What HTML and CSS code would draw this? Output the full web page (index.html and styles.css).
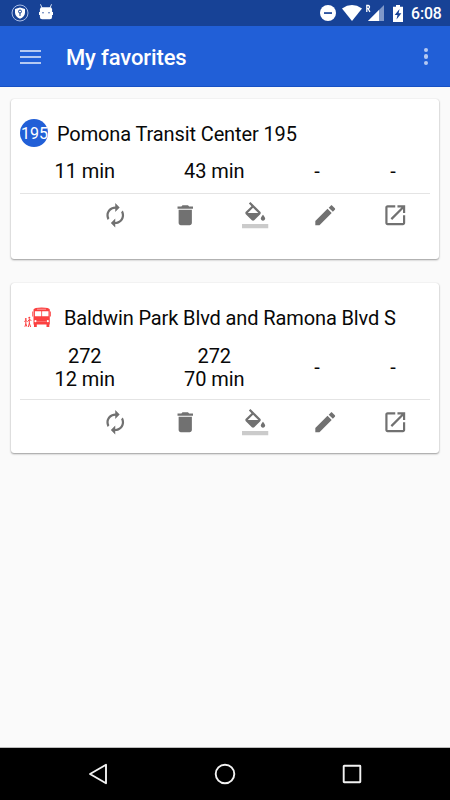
FILE: index.html
```html
<!DOCTYPE html>
<html lang="en">
<head>
<meta charset="utf-8">
<title>My favorites</title>
<link rel="stylesheet" href="styles.css">
</head>
<body>
<svg class="defs" width="0" height="0" aria-hidden="true">
  <symbol id="refresh" viewBox="0 0 24 24"><path d="M12 6v3l4-4-4-4v3c-4.420 0-8 3.580-8 8 0 1.570.46 3.030 1.240 4.260L6.700 14.800c-.45-.83-.7-1.790-.7-2.800 0-3.310 2.690-6 6-6zm6.760 1.740L17.300 9.200c.44.84.7 1.790.7 2.800 0 3.310-2.690 6-6 6v-3l-4 4 4 4v-3c4.420 0 8-3.580 8-8 0-1.570-.46-3.030-1.240-4.260z"/></symbol>
  <symbol id="trash" viewBox="0 0 24 24"><path d="M6 19c0 1.100.9 2 2 2h8c1.100 0 2-.9 2-2V7H6v12zM19 4h-3.500l-1-1h-5l-1 1H5v2h14V4z"/></symbol>
  <symbol id="fill" viewBox="0 0 24 24"><path d="M16.560 8.940L7.620 0 6.210 1.410l2.380 2.380-5.150 5.150c-.59.59-.59 1.540 0 2.120l5.500 5.500c.29.29.68.44 1.060.44s.77-.15 1.060-.44l5.500-5.500c.59-.58.59-1.530 0-2.120zM5.210 10L10 5.210 14.790 10H5.210zM19 11.500s-2 2.170-2 3.500c0 1.100.9 2 2 2s2-.9 2-2c0-1.330-2-3.500-2-3.500z"/><path fill="#cbcbcb" d="M0 20h24v4H0z"/></symbol>
  <symbol id="edit" viewBox="0 0 24 24"><path d="M3 17.250V21h3.750L17.810 9.940l-3.750-3.750L3 17.250zM20.710 7.040c.39-.39.39-1.020 0-1.410l-2.340-2.340c-.39-.39-1.020-.39-1.410 0l-1.830 1.830 3.750 3.750 1.830-1.830z"/></symbol>
  <symbol id="open" viewBox="0 0 24 24"><path d="M19 19H5V5h7V3H5c-1.110 0-2 .9-2 2v14c0 1.100.89 2 2 2h14c1.100 0 2-.9 2-2v-7h-2v7zM14 3v2h3.590l-9.830 9.830 1.410 1.410L19 6.410V10h2V3h-7z"/></symbol>
</svg>

<div class="status">
  <svg class="shield" viewBox="0 0 18 18"><circle cx="9" cy="9" r="8" fill="none" stroke="#a9bde6"/><path fill="#fff" d="M9 3.500l5 1.600v3.400c0 3-2 5-5 6.200-3-1.200-5-3.200-5-6.200V5.100z"/><circle cx="9" cy="7.500" r="1.500" fill="none" stroke="#174296"/><path d="M9 9v3" stroke="#174296"/></svg>
  <svg class="droid" viewBox="0 0 14 16"><path stroke="#dbe4f5" stroke-width="1" d="M1.500.3L3 4M12.500.3L11 4"/><rect x=".9" y="3.300" width="12.200" height="12" rx="2.200" fill="#fff"/><path stroke="#fff" stroke-width="1.200" d="M.6 8v3M13.400 8v3"/><circle cx="4" cy="8.800" r=".7" fill="#174296"/><circle cx="10" cy="8.800" r=".7" fill="#174296"/></svg>
  <span class="spacer"></span>
  <svg class="dnd" viewBox="0 0 16 16"><circle cx="8" cy="8" r="8" fill="#fff"/><path fill="#174296" d="M4 7.200h8v1.700H4z"/></svg>
  <svg class="wifi" viewBox="0 0 20 16"><path fill="#fff" d="M0 3.500Q10-3.300 20 3.500L10 16z"/></svg>
  <svg class="signal" viewBox="0 0 18 17"><path fill="#7f98c9" d="M18 1v16H2z"/><path fill="#fff" d="M13 6v11H2z"/><path fill="none" stroke="#fff" stroke-width="1.300" d="M.8 8V1.500h1.400q1.300 0 1.300 1.500T2.200 4.700H.8M2.200 4.700L3.900 8"/></svg>
  <svg class="battery" viewBox="0 0 10 17"><path fill="#fff" d="M3 0h4v1.700h3V17H0V1.700h3z"/><path fill="#174296" d="M6.500 4L1.700 10h2.800l-1 4.500L8.400 8.300H5.600z"/></svg>
  <span class="clock">6:08</span>
</div>

<header class="appbar">
  <div class="burger"><i></i><i></i><i></i></div>
  <h1>My favorites</h1>
  <div class="more"><i></i><i></i><i></i></div>
</header>

<main>
  <section class="card card-route">
    <div class="head"><span class="badge">195</span><h2>Pomona Transit Center 195</h2></div>
    <div class="times"><span>11 min</span><span>43 min</span><span>-</span><span>-</span></div>
    <div class="actions">
      <svg><use href="#refresh"/></svg><svg><use href="#trash"/></svg><svg class="paint"><use href="#fill"/></svg><svg><use href="#edit"/></svg><svg><use href="#open"/></svg>
    </div>
  </section>
  <section class="card card-stop">
    <div class="head">
      <svg class="bus" viewBox="0 0 27 21"><g fill="#fb4040"><path d="M9.500 2.500Q10 .5 17.700.5T25.800 2.500V17.500h-.5V20h-2.800v-2.500h-9.700V20H10v-2.500h-.5z"/><path d="M8.300 4.500h.8v5h-.8zM26.200 4.500h.8v5h-.8z"/><circle cx="1.800" cy="12" r=".9"/><circle cx="5.300" cy="10.800" r="1"/></g><path fill="none" stroke="#fb4040" stroke-width="1" d="M.3 14.500l1.600-1 1.500 1M1.800 13.300v3.500l-.9 3M1.800 16.500l1 3M3.700 14.500l1.700-2 2 1M5.300 12.300v4.200l-1 3.500M5.300 16l1.300 4"/><path fill="#fff" d="M10.900 4.300h6.400v5h-6.400zM18.100 4.300h6.400v5h-6.400z"/><path fill="#ffb0b0" d="M13 1.800h9v.8h-9z"/><path fill="#ff8080" d="M13 14h9v.7h-9z"/><circle cx="11.500" cy="14.200" r="1.100" fill="#fff"/><circle cx="23.800" cy="14.200" r="1.100" fill="#fff"/></svg>
      <h2>Baldwin Park Blvd and Ramona Blvd S</h2>
    </div>
    <div class="times"><span>272<br>12 min</span><span>272<br>70 min</span><span>-</span><span>-</span></div>
    <div class="actions">
      <svg><use href="#refresh"/></svg><svg><use href="#trash"/></svg><svg class="paint"><use href="#fill"/></svg><svg><use href="#edit"/></svg><svg><use href="#open"/></svg>
    </div>
  </section>
</main>

<nav class="navbar">
  <svg viewBox="0 0 22 22"><path d="M19 1.700v18.600L3 11z"/></svg>
  <svg viewBox="0 0 22 22"><circle cx="11" cy="11" r="9.300"/></svg>
  <svg viewBox="0 0 22 22"><rect x="2.700" y="2.700" width="16.600" height="16.600" rx=".5"/></svg>
</nav>
</body>
</html>
```

FILE: styles.css
```css
* { box-sizing: border-box; }
body {
  margin: 0;
  width: 450px;
  height: 800px;
  display: flex;
  flex-direction: column;
  overflow: hidden;
  background: #fafafa;
  color: #080808;
  font-family: Roboto, sans-serif;
}
svg { display: block; flex: none; }
.defs { position: absolute; }
h1, h2 { margin: 0; white-space: nowrap; }

.status {
  height: 26px;
  flex: none;
  display: flex;
  align-items: center;
  padding: 0 9px 0 11px;
  background: #174296;
}
.shield { width: 18px; height: 18px; }
.droid { width: 14px; height: 16px; margin: -2px 0 0 10px; }
.spacer { flex: 1; }
.dnd { width: 16px; height: 16px; }
.wifi { width: 20px; height: 16px; margin-left: 6px; }
.signal { width: 18px; height: 17px; margin: -1px 0 0 4px; }
.battery { width: 10px; height: 17px; margin-left: 9px; }
.clock {
  width: 30px;
  margin-left: 8px;
  padding-top: 2px;
  color: #fff;
  font-size: 15.800px;
  font-weight: 500;
  line-height: 24px;
  letter-spacing: -.1px;
  white-space: nowrap;
}

.appbar {
  height: 61px;
  flex: none;
  display: flex;
  align-items: center;
  padding: 0 22px 0 20px;
  background: #215fd7;
  border-bottom: 1px solid #1751c4;
}
.burger { width: 21px; display: grid; gap: 4px; margin-top: 1px; }
.burger i { height: 2px; background: #b5c9f2; }
.appbar h1 {
  flex: 1;
  margin-left: 25px;
  padding-top: 3px;
  color: #fff;
  font-size: 22px;
  font-weight: 500;
  line-height: 30px;
  letter-spacing: -.12px;
}
.more { display: grid; gap: 2.300px; margin-top: 1px; }
.more i { width: 4.300px; height: 4.300px; border-radius: 50%; background: #b5c9f2; }

main { flex: 1; padding: 12px 11px 0; }
.card {
  padding: 0 9px;
  border-radius: 3px;
  background: #fff;
  box-shadow: 0 1px 2px rgba(0, 0, 0, .38), 0 0 1px rgba(0, 0, 0, .15);
}
.card-route { height: 160px; padding-top: 20px; }
.card-stop { height: 169.500px; margin-top: 24px; padding-top: 20px; }
.head { display: flex; align-items: center; height: 28px; }
.head h2 { padding-top: 2px; font-size: 20px; font-weight: 400; letter-spacing: -.12px; }
.badge {
  width: 28px;
  height: 28px;
  flex: none;
  margin-right: 9px;
  border-radius: 50%;
  background: #215fd7;
  color: #fff;
  font-size: 16px;
  line-height: 29px;
  text-indent: 1px;
  text-align: center;
}
.bus { width: 27px; height: 21px; margin: 0 13px 0 4px; }
.times {
  display: grid;
  grid-template-columns: 129.500px 129.500px 76px 76px;
  align-items: center;
  height: 46px;
  padding-top: 3px;
  font-size: 20px;
  line-height: 23px;
  letter-spacing: -.1px;
  text-align: center;
}
.card-stop .times { height: 68px; padding-top: 5px; }
.actions {
  display: grid;
  grid-template-columns: repeat(5, 70px);
  justify-content: end;
  justify-items: center;
  padding-top: 8px;
  border-top: 1px solid #e4e4e4;
}
.card-stop .actions { padding-top: 8.500px; }
.actions svg { width: 26.500px; height: 26.500px; fill: #717171; }
.actions .paint { overflow: visible; }

.navbar {
  height: 53px;
  flex: none;
  display: grid;
  grid-template-columns: repeat(3, 127px);
  justify-content: center;
  justify-items: center;
  align-items: center;
  border-top: 1px solid #bbb;
  background: #000;
}
.navbar svg { width: 22px; height: 22px; fill: none; stroke: #f2f2f2; stroke-width: 1.900; stroke-linejoin: round; }
```
